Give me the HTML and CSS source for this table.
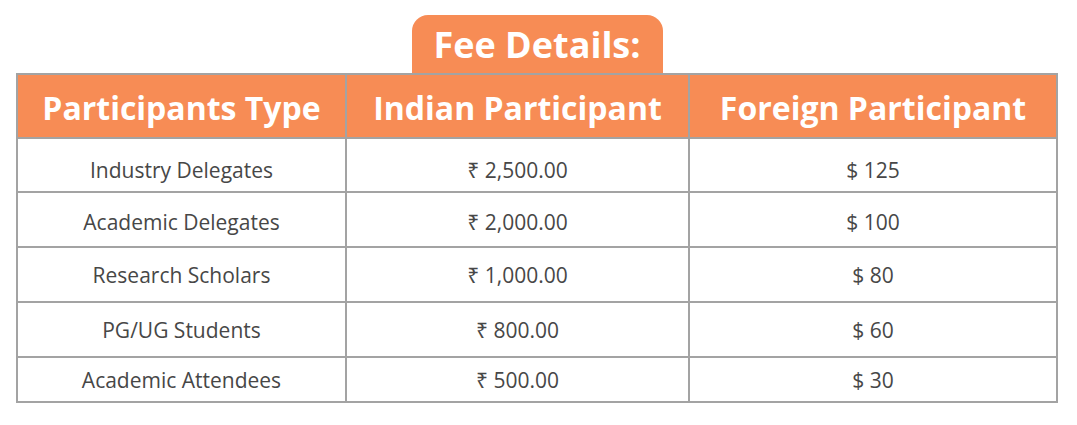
FILE: index.html
```html
<!DOCTYPE html>
<html lang="en">
<head>
<meta charset="utf-8">
<title>Fee Details</title>
<link rel="stylesheet" href="styles.css">
</head>
<body>
<div class="wrap">
  <div class="badge">Fee Details:</div>
  <table class="fees">
    <thead>
      <tr>
        <th class="c1">Participants Type</th>
        <th class="c2">Indian Participant</th>
        <th class="c3">Foreign Participant</th>
      </tr>
    </thead>
    <tbody>
      <tr class="r1"><td>Industry Delegates</td><td>₹ 2,500.00</td><td>$ 125</td></tr>
      <tr class="r2"><td>Academic Delegates</td><td>₹ 2,000.00</td><td>$ 100</td></tr>
      <tr><td>Research Scholars</td><td>₹ 1,000.00</td><td>$ 80</td></tr>
      <tr><td>PG/UG Students</td><td>₹ 800.00</td><td>$ 60</td></tr>
      <tr class="last"><td>Academic Attendees</td><td>₹ 500.00</td><td>$ 30</td></tr>
    </tbody>
  </table>
</div>
</body>
</html>
```
FILE: styles.css
```css
html, body {
  margin: 0;
  padding: 0;
  background: #ffffff;
}
body {
  font-family: "Open Sans", "Noto Sans", sans-serif;
  color: #474747;
}
.wrap {
  display: flex;
  flex-direction: column;
  align-items: center;
  padding: 15px 0 0 16px;
  width: 1042px;
}
.badge {
  background: #f78c55;
  color: #ffffff;
  font-weight: 700;
  font-size: 36px;
  width: 251px;
  height: 58px;
  line-height: 58px;
  text-align: center;
  border-radius: 16px 16px 0 0;
  box-sizing: border-box;
  padding-top: 1px;
}
.fees {
  border-collapse: separate;
  border-spacing: 0;
  width: 1042px;
  table-layout: fixed;
  border-top: 2px solid #a3a3a3;
  border-left: 2px solid #a3a3a3;
}
.fees th, .fees td {
  border-right: 2px solid #a3a3a3;
  border-bottom: 2px solid #a3a3a3;
  text-align: center;
  padding: 0;
  box-sizing: border-box;
  vertical-align: middle;
}
.fees th {
  background: #f78c55;
  color: #ffffff;
  font-weight: 700;
  font-size: 32px;
  height: 64px;
  padding-top: 3px;
}
.c1 { width: 329px; }
.c2 { width: 343px; }
.c3 { width: 368px; }
.fees td {
  font-size: 21px;
  height: 55px;
}
.fees tr.r1 td {
  height: 54px;
  padding-top: 9px;
}
.fees tr.r2 td {
  padding-top: 5px;
}
.fees tr.last td {
  height: 45px;
}
```
